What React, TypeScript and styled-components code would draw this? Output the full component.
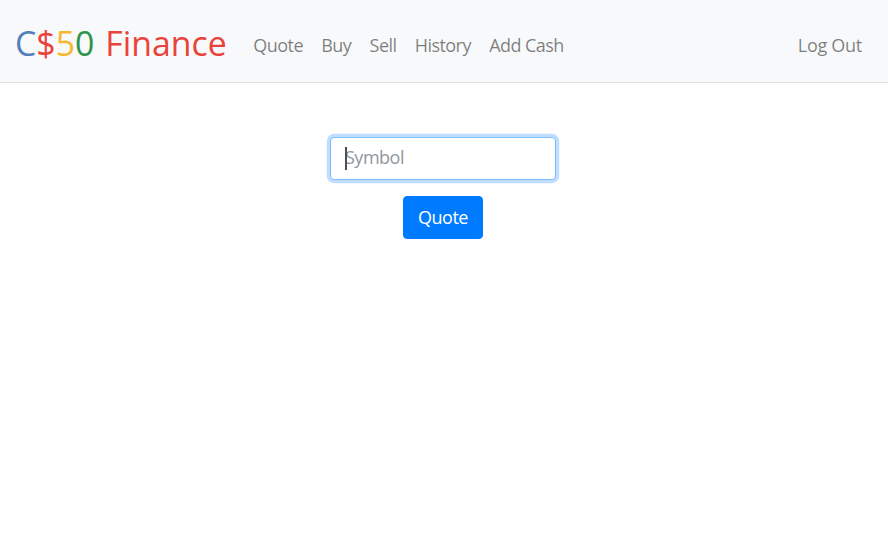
import React from "react";
import styled, { createGlobalStyle } from "styled-components";

const GlobalStyle = createGlobalStyle`
  html, body {
    margin: 0;
    background: #fff;
    color: #212529;
    font-family: "Open Sans", "Noto Sans", sans-serif;
    font-size: 18px;
  }
`;

const Navbar = styled.nav`
  box-sizing: border-box;
  display: flex;
  align-items: center;
  height: 83px;
  padding: 4px 17px 0 15px;
  background: #f8f9fa;
  border-bottom: 1px solid #dee2e6;
`;

const Brand = styled.a`
  display: flex;
  gap: 11px;
  margin-right: 17.5px;
  font-size: 33.8px;
  white-space: nowrap;
`;

const BrandMark = styled.span`
  display: flex;
`;

const BrandChar = styled.span<{ $color: string }>`
  color: ${(p) => p.$color};
`;

const NavList = styled.div`
  display: flex;
  flex: 1;
`;

const NavLink = styled.a`
  padding: 10px 9.15px 6px;
  font-size: 18px;
  letter-spacing: -0.55px;
  color: rgba(0, 0, 0, 0.5);
  white-space: nowrap;
`;

const LogOutLink = styled(NavLink)`
  letter-spacing: -0.3px;
`;

const Main = styled.main`
  display: flex;
  flex-direction: column;
  align-items: center;
  padding: 54px 2px 0 0;
`;

const QuoteForm = styled.form`
  display: flex;
  flex-direction: column;
  align-items: center;
  gap: 16px;
  margin: 0;
`;

const SymbolField = styled.div`
  position: relative;
  width: 226px;
`;

const SymbolInput = styled.input`
  display: block;
  box-sizing: border-box;
  width: 100%;
  height: 43px;
  padding: 0 14px 4px;
  border: 1px solid #80bdff;
  border-radius: 4px;
  outline: none;
  box-shadow: 0 0 0 3.2px rgba(0, 123, 255, 0.25);
  font: inherit;
  letter-spacing: -0.5px;
  caret-color: transparent;

  &::placeholder {
    color: #6c757d;
    opacity: 0.75;
  }
`;

const Caret = styled.span`
  position: absolute;
  left: 15px;
  top: 10px;
  width: 2px;
  height: 23px;
  background: #495057;
`;

const SubmitButton = styled.button`
  height: 43px;
  width: 80px;
  padding: 0 0 2px;
  border: 1px solid #007bff;
  border-radius: 4px;
  background: #007bff;
  color: #fff;
  font: inherit;
  letter-spacing: -0.5px;
`;

const brandMark = [
  { char: "C", color: "#537fbe" },
  { char: "$", color: "#ea433b" },
  { char: "5", color: "#f5b82e" },
  { char: "0", color: "#2e944b" },
];

const links = ["Quote", "Buy", "Sell", "History", "Add Cash"];

export default function App() {
  return (
    <>
      <GlobalStyle />
      <Navbar>
        <Brand>
          <BrandMark>
            {brandMark.map((item) => (
              <BrandChar key={item.char} $color={item.color}>
                {item.char}
              </BrandChar>
            ))}
          </BrandMark>
          <BrandChar $color="#ea433b">Finance</BrandChar>
        </Brand>
        <NavList>
          {links.map((link) => (
            <NavLink key={link}>{link}</NavLink>
          ))}
        </NavList>
        <LogOutLink>Log Out</LogOutLink>
      </Navbar>
      <Main>
        <QuoteForm onSubmit={(e) => e.preventDefault()}>
          <SymbolField>
            <SymbolInput placeholder="Symbol" type="text" />
            <Caret />
          </SymbolField>
          <SubmitButton type="submit">Quote</SubmitButton>
        </QuoteForm>
      </Main>
    </>
  );
}
